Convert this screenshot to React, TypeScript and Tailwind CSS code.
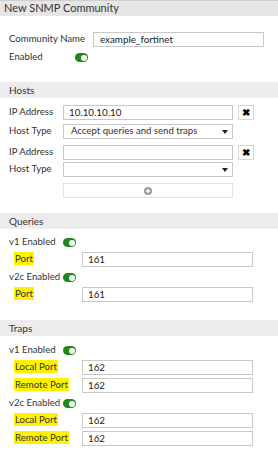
import React from 'react';

const font = { fontFamily: 'Lato, "Open Sans", sans-serif' };

const Toggle: React.FC = () => (
    <span className="inline-flex shrink-0 items-center w-[13px] h-[9px] rounded-full bg-[#1e8a1e] justify-end px-[1px]">
        <span className="block w-[6px] h-[6px] rounded-full bg-white" />
    </span>
);

const SectionHeader: React.FC<{ title: string }> = ({ title }) => (
    <div className="h-[16px] shrink-0 bg-[#ececec] flex items-center pl-[9px] text-[10px] text-[#333]">{title}</div>
);

const Field: React.FC<{ value?: string; className?: string }> = ({ value, className }) => (
    <div className={`h-[15px] shrink-0 border border-[#c8c8c8] bg-white flex items-center pl-[5px] text-[9.8px] text-[#222] ${className ?? ''}`}>
        {value}
    </div>
);

const Label: React.FC<{ w: string; children?: React.ReactNode }> = ({ w, children }) => (
    <span className={`${w} shrink-0 whitespace-nowrap`}>{children}</span>
);

const Hi: React.FC<{ children: React.ReactNode }> = ({ children }) => (
    <span className="bg-[#fff200] px-[1px] py-[1px] leading-[12px]">{children}</span>
);

const Arrow: React.FC = () => (
    <span className="w-0 h-0 border-l-[3.5px] border-r-[3.5px] border-t-[4px] border-l-transparent border-r-transparent border-t-[#222]" />
);

const RemoveBtn: React.FC = () => (
    <span className="ml-[5px] shrink-0 w-[16px] h-[15px] border border-[#d6d6d6] flex items-center justify-center text-[10px] font-bold text-black">✖</span>
);

const App: React.FC = () => {
    return (
        <div style={font} className="w-[278px] h-[453px] bg-white text-[#333] text-[9.6px] flex flex-col border-t border-[#d0d0d0] overflow-hidden">
            <div className="h-[15px] shrink-0 bg-[#e6e6e6] flex items-center pl-[4px] text-[11px] text-[#333] whitespace-nowrap">New SNMP Community</div>

            <div className="pt-[16px] pb-[18px] pl-[9px] flex flex-col gap-[4px]">
                <div className="flex items-center h-[15px]">
                    <Label w="w-[84px]">Community Name</Label>
                    <Field value="example_fortinet" className="w-[171px] pl-[6px]" />
                </div>
                <div className="flex items-center h-[13px]">
                    <Label w="w-[66px]">Enabled</Label>
                    <Toggle />
                </div>
            </div>

            <SectionHeader title="Hosts" />
            <div className="pt-[7px] pb-[15px] pl-[9px] flex flex-col">
                <div className="flex items-center h-[15px]">
                    <Label w="w-[54px]">IP Address</Label>
                    <Field value="10.10.10.10" className="w-[170px] border-[#888]" />
                    <RemoveBtn />
                </div>
                <div className="flex items-center h-[15px] mt-[4px]">
                    <Label w="w-[54px]">Host Type</Label>
                    <div className="w-[170px] shrink-0 h-[15px] border border-[#c8c8c8] flex items-center justify-between pl-[7px] pr-[4px] whitespace-nowrap">
                        <span>Accept queries and send traps</span>
                        <Arrow />
                    </div>
                </div>
                <div className="flex items-center h-[15px] mt-[6px]">
                    <Label w="w-[54px]">IP Address</Label>
                    <Field className="w-[170px]" />
                    <RemoveBtn />
                </div>
                <div className="flex items-center h-[15px] mt-[2px]">
                    <Label w="w-[54px]">Host Type</Label>
                    <div className="w-[170px] shrink-0 h-[15px] border border-[#c8c8c8] flex items-center justify-end pr-[4px]">
                        <Arrow />
                    </div>
                </div>
                <div className="flex items-center h-[15px] mt-[6px]">
                    <Label w="w-[54px]" />
                    <div className="w-[170px] shrink-0 h-[15px] border border-[#e2e2e2] flex items-center justify-center">
                        <svg width="8" height="8" viewBox="0 0 8 8">
                            <circle cx="4" cy="4" r="4" fill="#9a9a9a" />
                            <path d="M4 1.8v4.4M1.8 4h4.4" stroke="#fff" strokeWidth="1.3" />
                        </svg>
                    </div>
                </div>
            </div>

            <SectionHeader title="Queries" />
            <div className="pt-[7px] pb-[18px] pl-[9px] flex flex-col">
                <div className="flex items-center h-[13px]">
                    <Label w="w-[54px]">v1 Enabled</Label>
                    <Toggle />
                </div>
                <div className="flex items-center h-[15px] mt-[3px]">
                    <Label w="w-[73px] pl-[5px]"><Hi>Port</Hi></Label>
                    <Field value="161" className="w-[171px]" />
                </div>
                <div className="flex items-center h-[13px] mt-[4px]">
                    <Label w="w-[54px]">v2c Enabled</Label>
                    <Toggle />
                </div>
                <div className="flex items-center h-[15px] mt-[3px]">
                    <Label w="w-[73px] pl-[5px]"><Hi>Port</Hi></Label>
                    <Field value="161" className="w-[171px]" />
                </div>
            </div>

            <SectionHeader title="Traps" />
            <div className="pt-[8px] pl-[9px] flex flex-col">
                <div className="flex items-center h-[13px]">
                    <Label w="w-[54px]">v1 Enabled</Label>
                    <Toggle />
                </div>
                <div className="flex items-center h-[15px] mt-[3px]">
                    <Label w="w-[73px] pl-[5px]"><Hi>Local Port</Hi></Label>
                    <Field value="162" className="w-[171px]" />
                </div>
                <div className="flex items-center h-[15px] mt-[3px]">
                    <Label w="w-[73px] pl-[5px]"><Hi>Remote Port</Hi></Label>
                    <Field value="162" className="w-[171px]" />
                </div>
                <div className="flex items-center h-[13px] mt-[4px]">
                    <Label w="w-[54px]">v2c Enabled</Label>
                    <Toggle />
                </div>
                <div className="flex items-center h-[15px] mt-[3px]">
                    <Label w="w-[73px] pl-[5px]"><Hi>Local Port</Hi></Label>
                    <Field value="162" className="w-[171px]" />
                </div>
                <div className="flex items-center h-[15px] mt-[3px]">
                    <Label w="w-[73px] pl-[5px]"><Hi>Remote Port</Hi></Label>
                    <Field value="162" className="w-[171px]" />
                </div>
            </div>
        </div>
    );
};

export default App;
